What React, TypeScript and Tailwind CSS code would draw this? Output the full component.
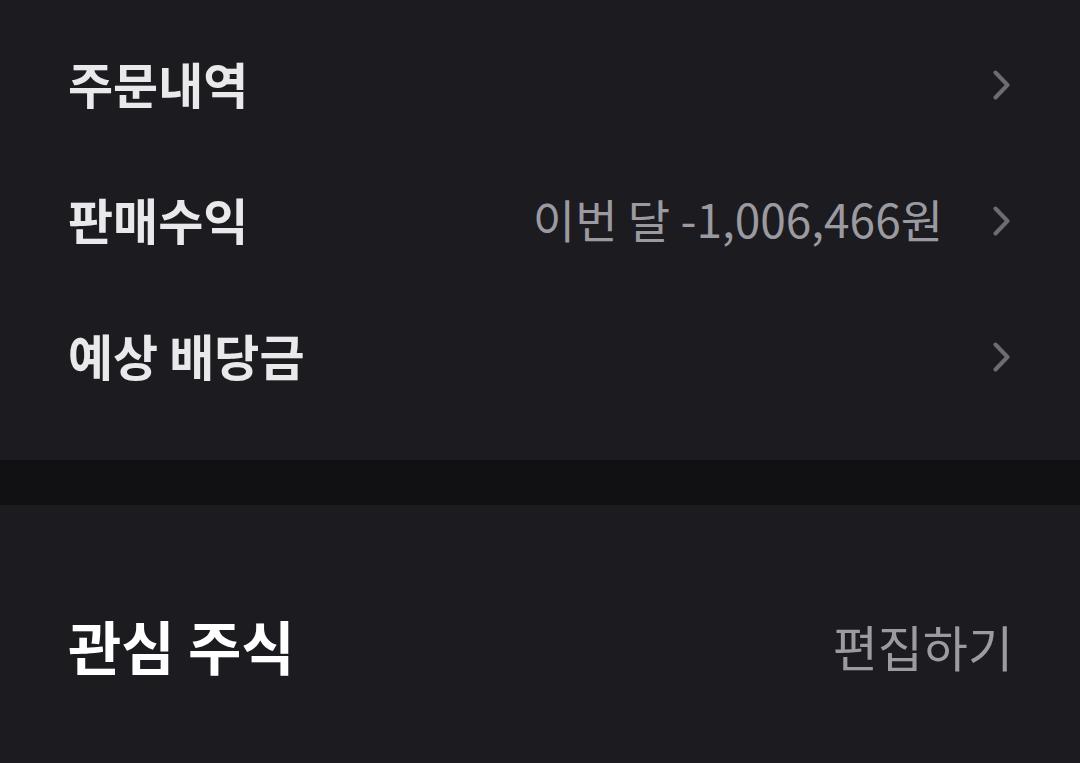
import React from 'react';

const font = { fontFamily: '"Noto Sans CJK KR", "Noto Sans", sans-serif' };

const Chevron = () => (
  <svg width="17" height="32" viewBox="0 0 17 32" fill="none" className="shrink-0">
    <path d="M2.5 3.5 L14.5 16 L2.5 28.5" stroke="#6c6c74" strokeWidth="4" strokeLinecap="round" strokeLinejoin="round" />
  </svg>
);

const rows = [
  { label: '주문내역' },
  { label: '판매수익', value: '이번 달 -1,006,466원' },
  { label: '예상 배당금' },
];

export default function App() {
  return (
    <div className="w-[1080px] h-[763px] bg-[#1b1b20] overflow-hidden" style={font}>
      <div className="pt-[17px] pb-[35px]">
        {rows.map((row) => (
          <div key={row.label} className="h-[136px] flex items-center justify-between pl-[68px] pr-[70px]">
            <span className="text-[49px] font-bold text-[#e9e9eb] leading-none mb-[6px]">{row.label}</span>
            <div className="flex items-center gap-[50px]">
              {row.value && (
                <span className="text-[46px] text-[#9a9aa0] leading-none mb-[6px]">{row.value}</span>
              )}
              <Chevron />
            </div>
          </div>
        ))}
      </div>
      <div className="h-[45px] bg-[#111113]" />
      <div className="h-[286px] flex items-center justify-between pl-[68px] pr-[67px] pb-[6px]">
        <span className="text-[58px] font-bold text-white leading-none">관심 주식</span>
        <span className="text-[49px] text-[#9b9ba1] leading-none">편집하기</span>
      </div>
    </div>
  );
}
